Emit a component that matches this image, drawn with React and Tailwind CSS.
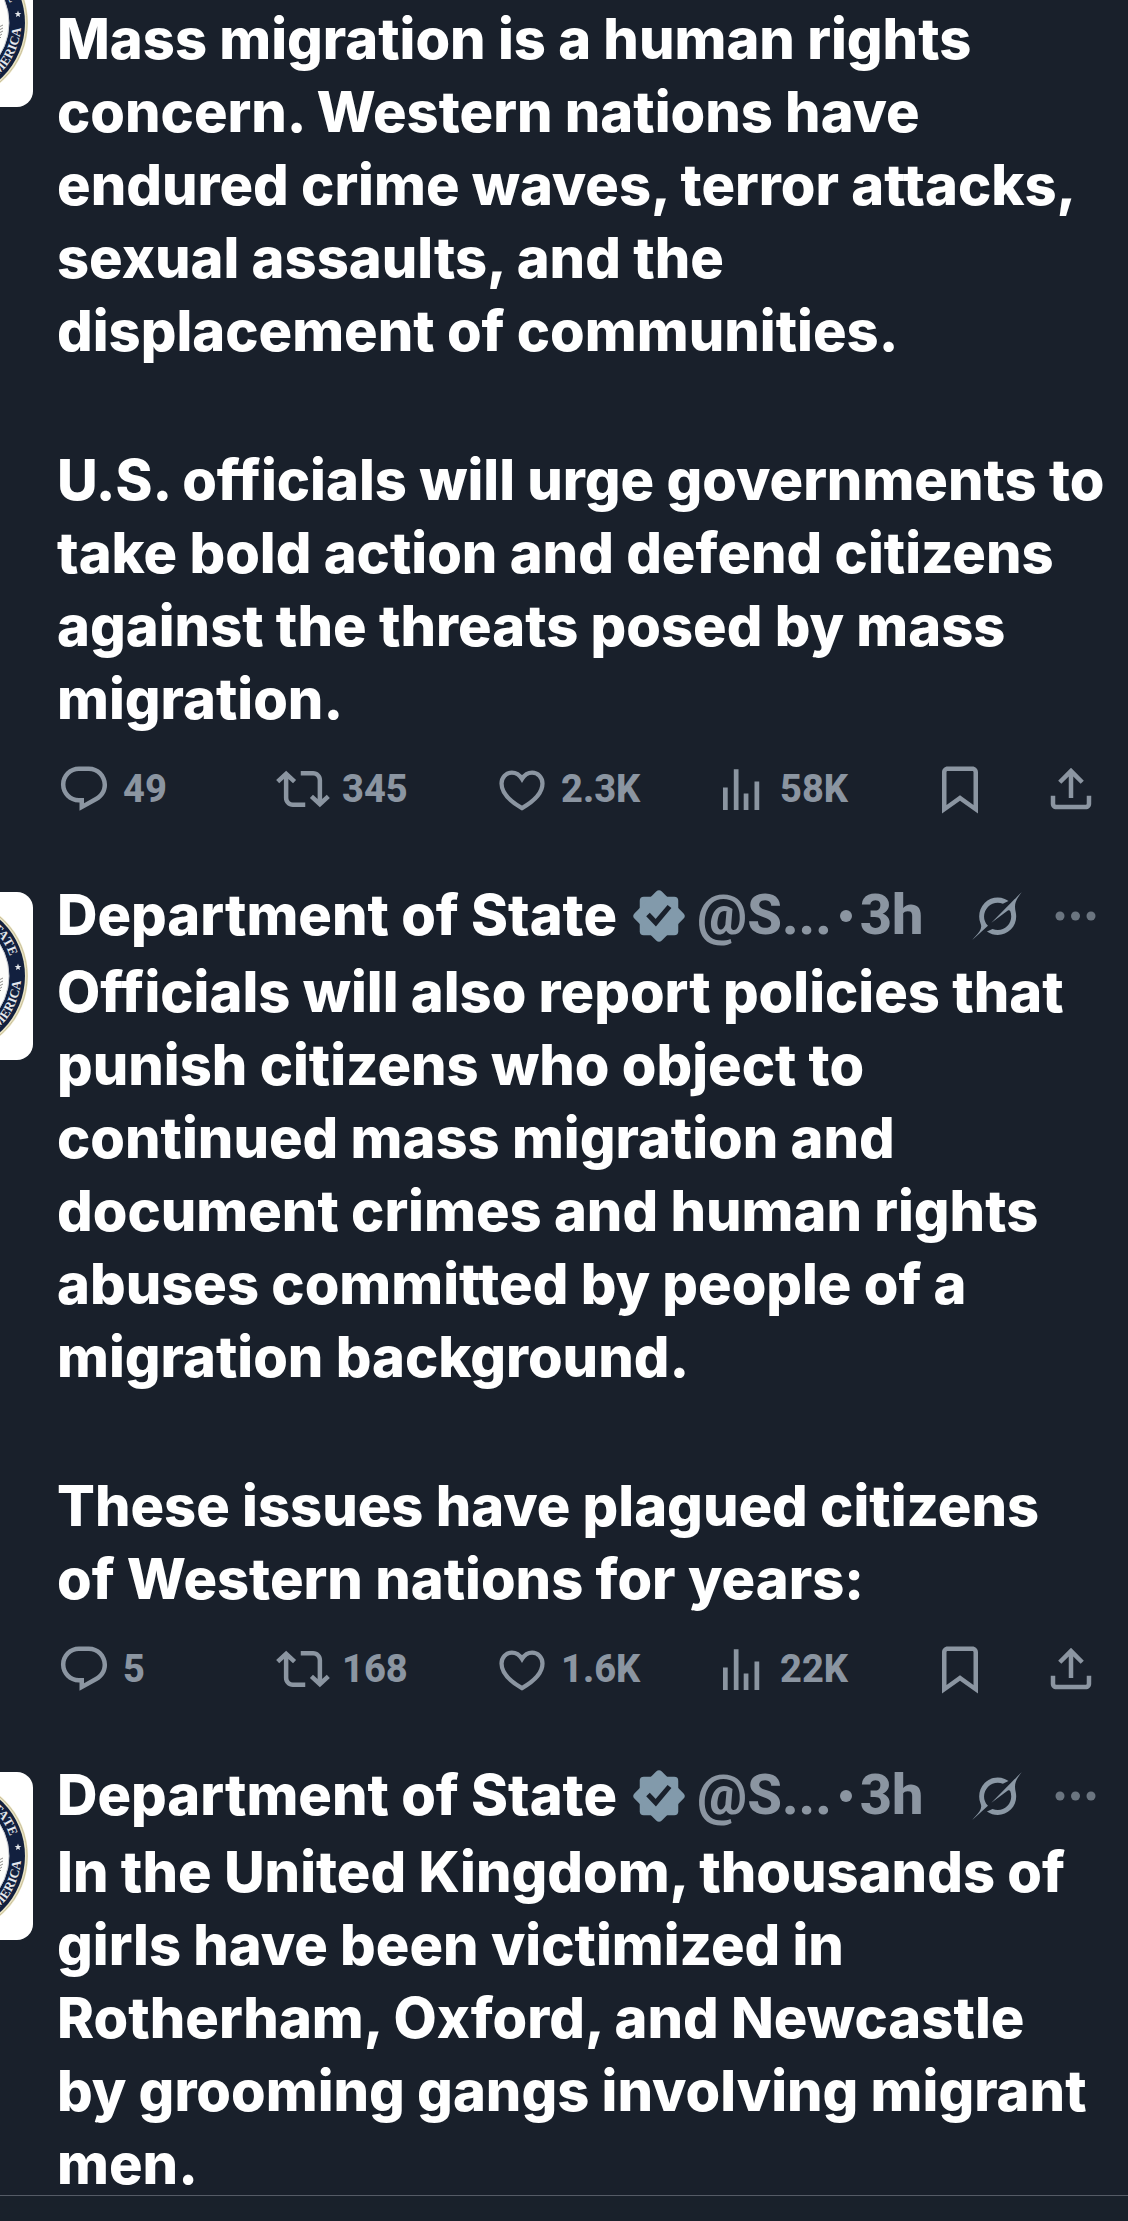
const posts = [
  {
    id: 1,
    continued: true,
    paragraphs: [
      [
        "Mass migration is a human rights",
        "concern. Western nations have",
        "endured crime waves, terror attacks,",
        "sexual assaults, and the",
        "displacement of communities.",
      ],
      [
        "U.S. officials will urge governments to",
        "take bold action and defend citizens",
        "against the threats posed by mass",
        "migration.",
      ],
    ],
    stats: { replies: "49", reposts: "345", likes: "2.3K", views: "58K" },
  },
  {
    id: 2,
    paragraphs: [
      [
        "Officials will also report policies that",
        "punish citizens who object to",
        "continued mass migration and",
        "document crimes and human rights",
        "abuses committed by people of a",
        "migration background.",
      ],
      ["These issues have plagued citizens", "of Western nations for years:"],
    ],
    stats: { replies: "5", reposts: "168", likes: "1.6K", views: "22K" },
  },
  {
    id: 3,
    paragraphs: [
      [
        "In the United Kingdom, thousands of",
        "girls have been victimized in",
        "Rotherham, Oxford, and Newcastle",
        "by grooming gangs involving migrant",
        "men.",
      ],
    ],
  },
];

const icons = {
  reply: (
    <path d="M1.751 10c0-4.42 3.584-8 8.005-8h4.366c4.49 0 8.129 3.64 8.129 8.13 0 2.96-1.607 5.68-4.196 7.11l-8.054 4.46v-3.69h-.067c-4.49.1-8.183-3.51-8.183-8.01zm8.005-6c-3.317 0-6.005 2.69-6.005 6 0 3.37 2.77 6.08 6.138 6.01l.351-.01h1.761v2.3l5.087-2.81c1.951-1.08 3.163-3.13 3.163-5.36 0-3.39-2.744-6.13-6.129-6.13H9.756z" />
  ),
  repost: (
    <path d="M4.5 3.88l4.432 4.14-1.364 1.46L5.5 7.55V16c0 1.1.896 2 2 2H13v2H7.5c-2.209 0-4-1.79-4-4V7.55L1.432 9.48.068 8.02 4.5 3.88zM16.5 6H11V4h5.5c2.209 0 4 1.79 4 4v8.45l2.068-1.93 1.364 1.46-4.432 4.14-4.432-4.14 1.364-1.46 2.068 1.93V8c0-1.1-.896-2-2-2z" />
  ),
  like: (
    <path
      d="M12 7.5C10.9 5.7 9.3 4.7 7.5 4.7 5 4.7 2.9 6.7 2.9 9.6c0 4.2 4 8 9.1 10.9 5.1-2.9 9.1-6.7 9.1-10.9 0-2.9-2.1-4.9-4.6-4.9-1.8 0-3.4 1-4.5 2.8z"
      fill="none"
      stroke="currentColor"
      strokeWidth="1.9"
    />
  ),
  views: (
    <path d="M4 11.3h2.1v10H4zM8.8 3.2h2.1v18.1H8.8zM13.2 14h2.1v7.3h-2.1zM18 8.7h2.1v12.6H18z" />
  ),
  bookmark: (
    <path d="M4 4.5C4 3.12 5.119 2 6.5 2h11C18.881 2 20 3.12 20 4.5v18.44l-8-5.71-8 5.71V4.5zM6.5 4c-.276 0-.5.22-.5.5v14.56l6-4.29 6 4.29V4.5c0-.28-.224-.5-.5-.5h-11z" />
  ),
  share: (
    <path d="M12 2.59l5.7 5.7-1.41 1.42L13 6.41V16h-2V6.41l-3.3 3.3-1.41-1.42L12 2.59zM21 15l-.02 3.51c0 1.38-1.12 2.49-2.5 2.49H5.5C4.11 21 3 19.88 3 18.5V15h2v3.5c0 .28.22.5.5.5h12.98c.28 0 .5-.22.5-.5L19 15h2z" />
  ),
};

function Icon({ name }) {
  return (
    <svg viewBox="0 0 24 24" className="size-[54px] shrink-0" fill="currentColor" aria-hidden="true">
      {icons[name]}
    </svg>
  );
}

function Seal({ id }) {
  return (
    <svg viewBox="0 0 168 168" className="size-[168px] shrink-0 rounded-2xl bg-white" aria-hidden="true">
      <defs>
        <path id={`seal-top-${id}`} d="M20 84A64 64 0 0 1 144.8 64.2" />
        <path id={`seal-bottom-${id}`} d="M12 84A72 72 0 0 0 155.8 89" />
      </defs>
      <circle cx="84" cy="84" r="79" fill="#e9e3c4" />
      <circle cx="84" cy="84" r="78" fill="none" stroke="#c9c09a" strokeWidth="1" />
      <circle cx="84" cy="84" r="76" fill="#12203f" />
      <circle cx="84" cy="84" r="60" fill="#fdfdfb" stroke="#c8cbd0" strokeWidth="1" />
      <g fill="#e4e7ec" fontSize="13" className="font-['Liberation_Serif',serif]">
        <text textAnchor="end">
          <textPath href={`#seal-top-${id}`} startOffset="100%">STATE</textPath>
        </text>
        <text textAnchor="end">
          <textPath href={`#seal-bottom-${id}`} startOffset="100%">AMERICA</textPath>
        </text>
      </g>
      <path
        d="M153 71.5l.9 2.4 2.5.1-2 1.6.7 2.5-2.1-1.4-2.1 1.4.7-2.5-2-1.6 2.5-.1z"
        fill="#e4e7ec"
      />
      <path d="M134 88l4-2M134 91l4-2M134 94l4-2M134 97l3-2M134 100l2-2" stroke="#8e8e8c" strokeWidth="1" />
    </svg>
  );
}

function VerifiedBadge() {
  return (
    <svg viewBox="0 0 52 52" className="size-[52px] shrink-0" role="img" aria-label="Verified account">
      <g fill="#829aab">
        <rect x="6.75" y="6.75" width="38.5" height="38.5" rx="4" />
        <rect x="6.75" y="6.75" width="38.5" height="38.5" rx="4" transform="rotate(45 26 26)" />
      </g>
      <path d="M15 24.5l7.8 8.2L36.5 16.5" fill="none" stroke="#19202b" strokeWidth="5" />
    </svg>
  );
}

function PostHeader() {
  return (
    <header className="flex items-center leading-[75px] mb-[3px] whitespace-nowrap">
      <a href="#profile" className="text-white">Department of State</a>
      <span className="ml-4 flex">
        <VerifiedBadge />
      </span>
      <div className="ml-3 flex items-center text-[#8b95a1] font-['Roboto',sans-serif]">
        <span>@S...</span>
        <span className="mx-2 size-3 rounded-full bg-[#8b95a1]" />
        <a href="#post">3h</a>
      </div>
      <div className="ml-auto flex items-center gap-8">
        <button type="button" aria-label="Explain this post" className="text-[#8b98a5]">
          <svg viewBox="0 0 33 32" className="w-[50px] h-12" fill="currentColor" aria-hidden="true">
            <path d="M12.745 20.54l10.97-8.19c.539-.4 1.307-.244 1.564.38 1.349 3.288.746 7.241-1.938 9.955-2.683 2.714-6.417 3.31-9.83 1.954l-3.728 1.745c5.347 3.697 11.84 2.782 15.898-1.324 3.219-3.255 4.216-7.692 3.284-11.693l.008.009c-1.351-5.878.332-8.227 3.782-13.031L33 0l-4.54 4.59v-.014L12.743 20.544m-2.263 1.987c-3.837-3.707-3.175-9.446.1-12.755 2.42-2.449 6.388-3.448 9.852-1.979l3.72-1.737c-.67-.49-1.53-1.017-2.515-1.387-4.455-1.854-9.789-.931-13.41 2.728-3.483 3.523-4.579 8.94-2.697 13.561 1.405 3.454-.899 5.898-3.22 8.364C1.49 30.2.666 31.074 0 32l10.478-9.466" />
          </svg>
        </button>
        <button type="button" aria-label="More" className="text-[#6b7580]">
          <svg viewBox="0 0 44 12" className="w-11 h-3" fill="currentColor" aria-hidden="true">
            <circle cx="6" cy="6" r="4.5" />
            <circle cx="21.5" cy="6" r="4.5" />
            <circle cx="37" cy="6" r="4.5" />
          </svg>
        </button>
      </div>
    </header>
  );
}

function Stat({ icon, label, value }) {
  return (
    <div className="flex-1">
      <button type="button" aria-label={`${value} ${label}`} className="flex items-center gap-3">
        <Icon name={icon} />
        <span>{value}</span>
      </button>
    </div>
  );
}

function Actions({ stats }) {
  return (
    <div className="mt-[26px] h-[54px] flex items-center text-[#8b95a1] text-[38px] leading-none font-extrabold font-['Roboto',sans-serif]">
      <Stat icon="reply" label="replies" value={stats.replies} />
      <Stat icon="repost" label="reposts" value={stats.reposts} />
      <Stat icon="like" label="likes" value={stats.likes} />
      <Stat icon="views" label="views" value={stats.views} />
      <div className="flex gap-[57px]">
        <button type="button" aria-label="Bookmark">
          <Icon name="bookmark" />
        </button>
        <button type="button" aria-label="Share">
          <Icon name="share" />
        </button>
      </div>
    </div>
  );
}

function Post({ post }) {
  return (
    <article className={post.continued ? "flex gap-6 pt-[3px] pb-[62px]" : "flex gap-6 pb-[62px]"}>
      {/* the avatar runs off the left edge of the feed */}
      <div className={post.continued ? "w-[33px] -mt-16 flex justify-end" : "w-[33px] mt-[14px] flex justify-end"}>
        <Seal id={post.id} />
      </div>
      <div className="flex-1 min-w-0 pr-[30px]">
        {!post.continued && <PostHeader />}
        <div className="flex flex-col gap-[76px] text-white">
          {post.paragraphs.map((lines) => (
            <p key={lines[0]} className="leading-[73px] whitespace-nowrap">
              {lines.map((line) => (
                <span key={line} className="block">{line}</span>
              ))}
            </p>
          ))}
        </div>
        {post.stats && <Actions stats={post.stats} />}
      </div>
    </article>
  );
}

export default function App() {
  return (
    <div className="h-screen overflow-hidden bg-[#19202b] font-['Inter',sans-serif] font-extrabold text-[56px]">
      <main>
        {posts.map((post) => (
          <Post key={post.id} post={post} />
        ))}
      </main>
      <footer className="fixed inset-x-0 bottom-0 h-[26px] border-t border-[#555b66] bg-[#19212b]" />
    </div>
  );
}
